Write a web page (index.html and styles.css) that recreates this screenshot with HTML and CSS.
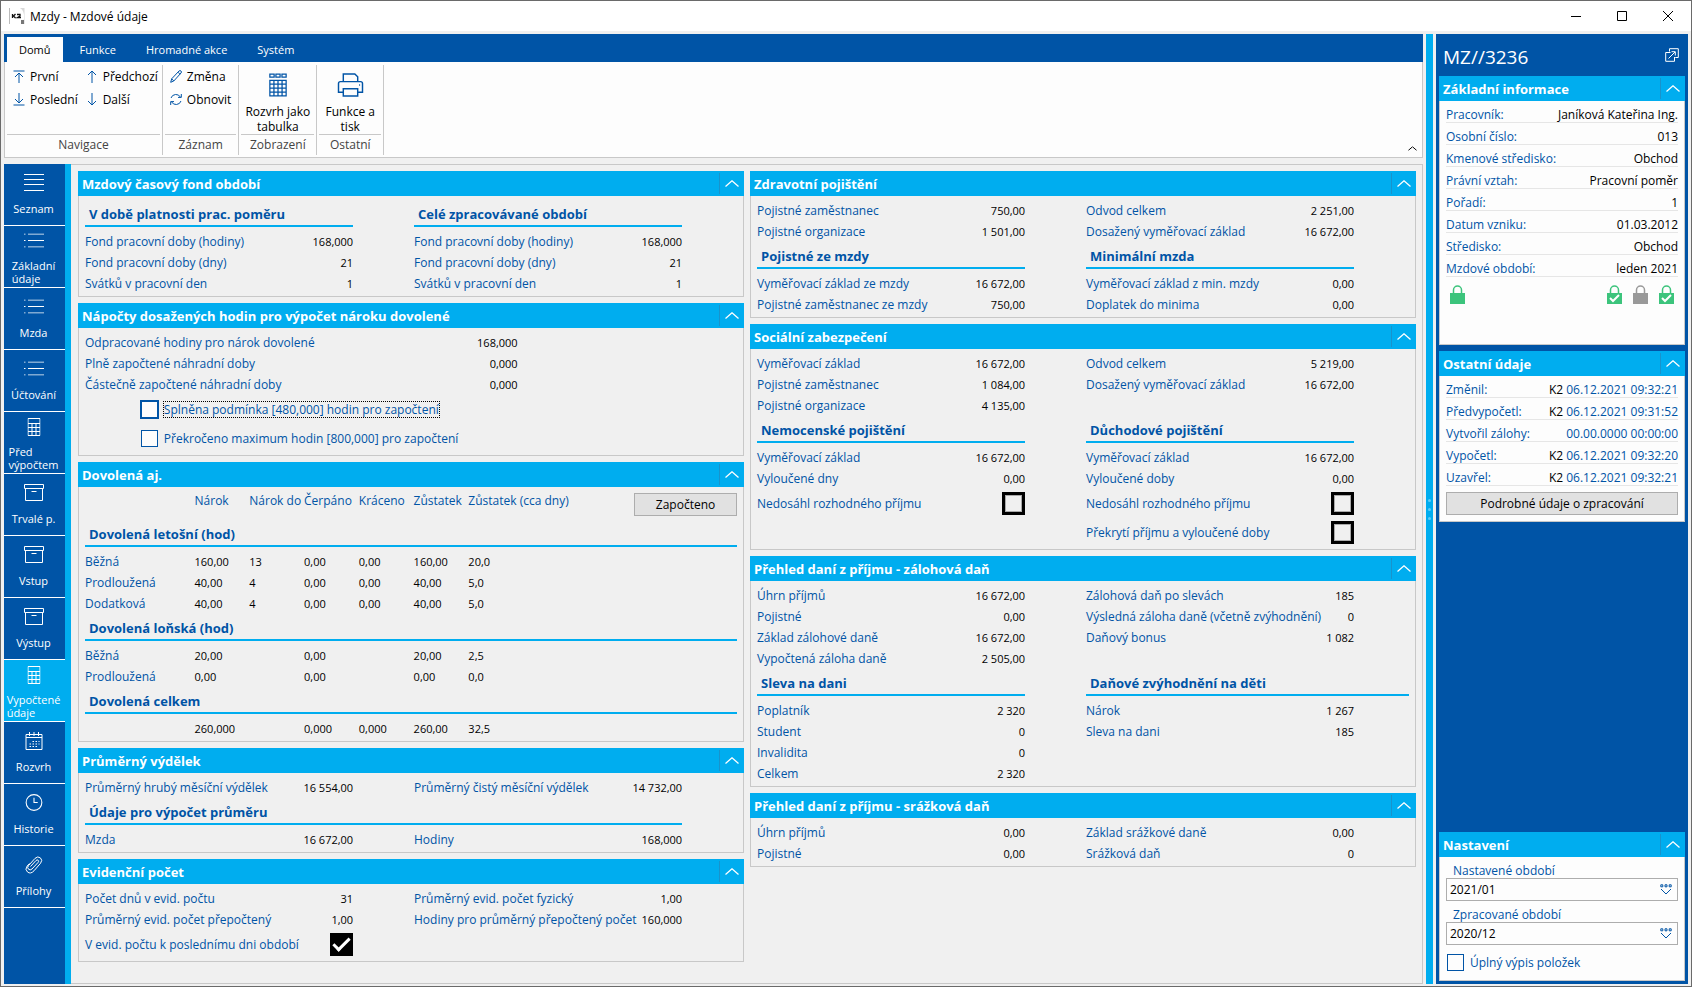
FILE: index.html
```html
<!DOCTYPE html>
<html lang="cs">
<head>
<meta charset="utf-8">
<title>Mzdy - Mzdové údaje</title>
<link rel="stylesheet" href="styles.css">
</head>
<body>
<svg class="defs" aria-hidden="true">
  <symbol id="up" viewBox="0 0 14 7"><path d="M.5 6.500 7 .8l6.500 5.700"/></symbol>
  <symbol id="list" viewBox="0 0 20 14"><path d="M4 .5h16M4 7h16M4 13.500h16M0 .5h1.500M0 7h1.500M0 13.500h1.500"/></symbol>
  <symbol id="calc" viewBox="0 0 13 18"><path d="M.5.5h12v17H.5zM.5 5.500h12M.5 9.500h12M.5 13.500h12M4.500 5.500v12M8.500 5.500v12"/></symbol>
  <symbol id="box" viewBox="0 0 20 17"><path d="M.5.5h19v4H.5zM1.500 4.500v12h17v-12M7.500 7.500h5"/></symbol>
  <symbol id="lock" viewBox="0 0 15 19"><path class="shackle" d="M3.500 8V5a4 4 0 0 1 8 0v3"/><path class="case" d="M0 8h15v11H0z"/></symbol>
  <symbol id="pick" viewBox="0 0 12 11"><path d="M.8.8h2v2h-2zM5 .8h2v2H5zM9.200.8h2v2h-2zM1 5l5 5 5-5"/></symbol>
</svg>
<div class="window">
  <header class="titlebar">
    <svg class="logo" viewBox="0 0 16 16"><path d="M.5 0v16" stroke="#bbb"/><path d="M11 0q5 3 4 11-1 3-3 5h3.500V0z" fill="#d8d8d8"/><path d="M12 12h3v4h-3z" fill="#777"/><path d="M3.500 6v4M6.500 6l-2 2 2 2M8 6.500h3V8L8.500 9.500H12" fill="none" stroke="#111" stroke-width="1.300"/></svg>
    <h1>Mzdy - Mzdové údaje</h1>
    <button class="win" aria-label="Minimalizovat"><svg viewBox="0 0 10 10"><path d="M0 5.500h10"/></svg></button>
    <button class="win" aria-label="Maximalizovat"><svg viewBox="0 0 10 10"><path d="M.5.5h9v9h-9z"/></svg></button>
    <button class="win" aria-label="Zavřít"><svg viewBox="0 0 10 10"><path d="m0 0 10 10M10 0 0 10"/></svg></button>
  </header>
  <div class="frame">
    <div class="left">
      <nav class="tabs">
        <button class="tab on">Domů</button><button class="tab">Funkce</button><button class="tab">Hromadné akce</button><button class="tab">Systém</button>
      </nav>
      <div class="ribbon">
        <section class="group">
          <div class="tools nav">
            <button class="tool"><svg viewBox="0 0 12 13"><path d="M.5 1h11M6 13V3M2 7l4-4 4 4"/></svg>První</button>
            <button class="tool"><svg viewBox="0 0 12 13"><path d="M6 13V1M2 5l4-4 4 4"/></svg>Předchozí</button>
            <button class="tool"><svg viewBox="0 0 12 13"><path d="M.5 12h11M6 0v10M2 6l4 4 4-4"/></svg>Poslední</button>
            <button class="tool"><svg viewBox="0 0 12 13"><path d="M6 0v12M2 8l4 4 4-4"/></svg>Další</button>
          </div>
          <h2>Navigace</h2>
        </section>
        <section class="group">
          <div class="tools">
            <button class="tool"><svg viewBox="0 0 12 13"><path d="m.7 12.300 1-3.500L9 1q1-.9 2 0t0 2L3.800 11zM8 2.200l2 2M1.700 8.800l2.100 2.200"/></svg>Změna</button>
            <button class="tool"><svg viewBox="0 0 12 13"><path d="M1 5a5.200 5.200 0 0 1 9.500-.8M11.300 1v3.400H8M11 8a5.200 5.200 0 0 1-9.500.8M.7 12V8.600H4"/></svg>Obnovit</button>
          </div>
          <h2>Záznam</h2>
        </section>
        <section class="group">
          <button class="big"><svg class="ic-table" viewBox="0 0 17 23"><path d="M.7 1h4.100v3H.7zM6.500 1h4v3h-4zM12.300 1h4v3h-4zM.7 7h15.600v15H.7zM.7 10.700h15.600M.7 14.500h15.600M.7 18.300h15.600M4.600 7v15M8.500 7v15M12.400 7v15"/></svg>Rozvrh jako<br>tabulka</button>
          <h2>Zobrazení</h2>
        </section>
        <section class="group">
          <button class="big"><svg class="ic-print" viewBox="0 0 27 25"><path d="M6 9V1h12l3 3v5M6 20H1V11q0-2 2-2h21q2 0 2 2v9h-5M6 16.500h15V24H6zM22.500 12.500h1"/></svg>Funkce a<br>tisk</button>
          <h2>Ostatní</h2>
        </section>
        <button class="collapse" aria-label="Sbalit pás"><svg viewBox="0 0 14 7"><use href="#up"/></svg></button>
      </div>
      <div class="work">
        <nav class="side">
          <a href="#seznam"><svg viewBox="0 0 20 17"><path d="M0 .5h20M0 5.500h20M0 10.500h20M0 16.500h20"/></svg><span>Seznam</span></a>
          <a href="#zaklad" class="two"><svg viewBox="0 0 20 14"><use href="#list"/></svg><span>Základní údaje</span></a>
          <a href="#mzda"><svg viewBox="0 0 20 14"><use href="#list"/></svg><span>Mzda</span></a>
          <a href="#uctovani"><svg viewBox="0 0 20 14"><use href="#list"/></svg><span>Účtování</span></a>
          <a href="#pred" class="two"><svg class="tall" viewBox="0 0 13 18"><use href="#calc"/></svg><span>Před výpočtem</span></a>
          <a href="#trvale"><svg viewBox="0 0 20 17"><use href="#box"/></svg><span>Trvalé&nbsp;p.</span></a>
          <a href="#vstup"><svg viewBox="0 0 20 17"><use href="#box"/></svg><span>Vstup</span></a>
          <a href="#vystup"><svg viewBox="0 0 20 17"><use href="#box"/></svg><span>Výstup</span></a>
          <a href="#vypoctene" class="two on"><svg class="tall" viewBox="0 0 13 18"><use href="#calc"/></svg><span>Vypočtené údaje</span></a>
          <a href="#rozvrh"><svg class="tall" viewBox="0 0 17 18"><path d="M.5 2.500h16v15H.5zM.5 5.500h16M4 0v4M8.500 0v4M13 0v4M7 9.500h1.500M10 9.500h1.500M13 9.500h1M4 12h1.500M7 12h1.500M10 12h1.500M13 12h1M4 14.500h1.500M7 14.500h1.500M10 14.500h1.500"/></svg><span>Rozvrh</span></a>
          <a href="#historie"><svg viewBox="0 0 16 16"><path d="M8 .6a7.400 7.400 0 1 1 0 14.800A7.400 7.400 0 0 1 8 .6zM8 3.500V8h3.500"/></svg><span>Historie</span></a>
          <a href="#prilohy"><svg class="tall" viewBox="0 0 17 18"><path d="M5 10.500 10.500 4.500q1.200-1.200 2.200-.2t-.2 2.200L6.500 13q-1.800 1.700-3.500.2t0-3.600l6.500-7.200q2.800-2.700 5.400-.5t.2 5.300L8.500 14.800Q5 18.500 2 16t-.3-6L4 7.500"/></svg><span>Přílohy</span></a>
        </nav>
        <main class="content">
          <div class="col">
            <section class="panel">
              <header><h2>Mzdový časový fond období</h2><button aria-label="Sbalit"><svg viewBox="0 0 14 7"><use href="#up"/></svg></button></header>
              <div class="body grid">
                <h3 class="a">V době platnosti prac. poměru</h3><h3 class="b">Celé zpracovávané období</h3>
                <p class="a"><span>Fond pracovní doby (hodiny)</span><b>168,000</b></p><p class="b"><span>Fond pracovní doby (hodiny)</span><b>168,000</b></p>
                <p class="a"><span>Fond pracovní doby (dny)</span><b>21</b></p><p class="b"><span>Fond pracovní doby (dny)</span><b>21</b></p>
                <p class="a"><span>Svátků v pracovní den</span><b>1</b></p><p class="b"><span>Svátků v pracovní den</span><b>1</b></p>
              </div>
            </section>
            <section class="panel">
              <header><h2>Nápočty dosažených hodin pro výpočet nároku dovolené</h2><button aria-label="Sbalit"><svg viewBox="0 0 14 7"><use href="#up"/></svg></button></header>
              <div class="body grid">
                <p class="wide"><span>Odpracované hodiny pro nárok dovolené</span><b>168,000</b></p>
                <p class="wide"><span>Plně započtené náhradní doby</span><b>0,000</b></p>
                <p class="wide"><span>Částečně započtené náhradní doby</span><b>0,000</b></p>
                <label class="tick focus"><input type="checkbox"><span>Splněna podmínka [480,000] hodin pro započtení</span></label>
                <label class="tick"><input type="checkbox"><span>Překročeno maximum hodin [800,000] pro započtení</span></label>
              </div>
            </section>
            <section class="panel">
              <header><h2>Dovolená aj.</h2><button aria-label="Sbalit"><svg viewBox="0 0 14 7"><use href="#up"/></svg></button></header>
              <div class="body">
                <table class="leave">
                  <colgroup><col class="name"><col class="num"><col class="num"><col class="num"><col class="num"><col class="num"><col><col class="act"></colgroup>
                  <thead><tr><td></td><th>Nárok</th><th>Nárok do</th><th>Čerpáno</th><th>Kráceno</th><th>Zůstatek</th><th>Zůstatek (cca dny)</th><td><button class="btn">Započteno</button></td></tr></thead>
                  <tbody>
                    <tr><th colspan="8"><h3>Dovolená letošní (hod)</h3></th></tr>
                    <tr><th>Běžná</th><td>160,00</td><td>13</td><td>0,00</td><td>0,00</td><td>160,00</td><td>20,0</td><td></td></tr>
                    <tr><th>Prodloužená</th><td>40,00</td><td>4</td><td>0,00</td><td>0,00</td><td>40,00</td><td>5,0</td><td></td></tr>
                    <tr><th>Dodatková</th><td>40,00</td><td>4</td><td>0,00</td><td>0,00</td><td>40,00</td><td>5,0</td><td></td></tr>
                    <tr><th colspan="8"><h3>Dovolená loňská (hod)</h3></th></tr>
                    <tr><th>Běžná</th><td>20,00</td><td></td><td>0,00</td><td></td><td>20,00</td><td>2,5</td><td></td></tr>
                    <tr><th>Prodloužená</th><td>0,00</td><td></td><td>0,00</td><td></td><td>0,00</td><td>0,0</td><td></td></tr>
                    <tr><th colspan="8"><h3>Dovolená celkem</h3></th></tr>
                    <tr><td></td><td>260,000</td><td></td><td>0,000</td><td>0,000</td><td>260,00</td><td>32,5</td><td></td></tr>
                  </tbody>
                </table>
              </div>
            </section>
            <section class="panel">
              <header><h2>Průměrný výdělek</h2><button aria-label="Sbalit"><svg viewBox="0 0 14 7"><use href="#up"/></svg></button></header>
              <div class="body grid">
                <p class="a"><span>Průměrný hrubý měsíční výdělek</span><b>16 554,00</b></p><p class="b"><span>Průměrný čistý měsíční výdělek</span><b>14 732,00</b></p>
                <h3 class="ab">Údaje pro výpočet průměru</h3>
                <p class="a"><span>Mzda</span><b>16 672,00</b></p><p class="b"><span>Hodiny</span><b>168,000</b></p>
              </div>
            </section>
            <section class="panel">
              <header><h2>Evidenční počet</h2><button aria-label="Sbalit"><svg viewBox="0 0 14 7"><use href="#up"/></svg></button></header>
              <div class="body grid">
                <p class="a"><span>Počet dnů v evid. počtu</span><b>31</b></p><p class="b"><span>Průměrný evid. počet fyzický</span><b>1,00</b></p>
                <p class="a"><span>Průměrný evid. počet přepočtený</span><b>1,00</b></p><p class="b"><span>Hodiny pro průměrný přepočtený počet</span><b>160,000</b></p>
                <label class="flag a"><span>V evid. počtu k poslednímu dni období</span><input type="checkbox" checked></label>
              </div>
            </section>
          </div>
          <div class="col">
            <section class="panel">
              <header><h2>Zdravotní pojištění</h2><button aria-label="Sbalit"><svg viewBox="0 0 14 7"><use href="#up"/></svg></button></header>
              <div class="body grid">
                <p class="a"><span>Pojistné zaměstnanec</span><b>750,00</b></p><p class="b"><span>Odvod celkem</span><b>2 251,00</b></p>
                <p class="a"><span>Pojistné organizace</span><b>1 501,00</b></p><p class="b"><span>Dosažený vyměřovací základ</span><b>16 672,00</b></p>
                <h3 class="a">Pojistné ze mzdy</h3><h3 class="b">Minimální mzda</h3>
                <p class="a"><span>Vyměřovací základ ze mzdy</span><b>16 672,00</b></p><p class="b"><span>Vyměřovací základ z min. mzdy</span><b>0,00</b></p>
                <p class="a"><span>Pojistné zaměstnanec ze mzdy</span><b>750,00</b></p><p class="b"><span>Doplatek do minima</span><b>0,00</b></p>
              </div>
            </section>
            <section class="panel">
              <header><h2>Sociální zabezpečení</h2><button aria-label="Sbalit"><svg viewBox="0 0 14 7"><use href="#up"/></svg></button></header>
              <div class="body grid">
                <p class="a"><span>Vyměřovací základ</span><b>16 672,00</b></p><p class="b"><span>Odvod celkem</span><b>5 219,00</b></p>
                <p class="a"><span>Pojistné zaměstnanec</span><b>1 084,00</b></p><p class="b"><span>Dosažený vyměřovací základ</span><b>16 672,00</b></p>
                <p class="a"><span>Pojistné organizace</span><b>4 135,00</b></p>
                <h3 class="a">Nemocenské pojištění</h3><h3 class="b">Důchodové pojištění</h3>
                <p class="a"><span>Vyměřovací základ</span><b>16 672,00</b></p><p class="b"><span>Vyměřovací základ</span><b>16 672,00</b></p>
                <p class="a"><span>Vyloučené dny</span><b>0,00</b></p><p class="b"><span>Vyloučené doby</span><b>0,00</b></p>
                <label class="flag a"><span>Nedosáhl rozhodného příjmu</span><input type="checkbox"></label><label class="flag b"><span>Nedosáhl rozhodného příjmu</span><input type="checkbox"></label>
                <label class="flag b"><span>Překrytí příjmu a vyloučené doby</span><input type="checkbox"></label>
              </div>
            </section>
            <section class="panel">
              <header><h2>Přehled daní z příjmu - zálohová daň</h2><button aria-label="Sbalit"><svg viewBox="0 0 14 7"><use href="#up"/></svg></button></header>
              <div class="body grid">
                <p class="a"><span>Úhrn příjmů</span><b>16 672,00</b></p><p class="b"><span>Zálohová daň po slevách</span><b>185</b></p>
                <p class="a"><span>Pojistné</span><b>0,00</b></p><p class="b"><span>Výsledná záloha daně (včetně zvýhodnění)</span><b>0</b></p>
                <p class="a"><span>Základ zálohové daně</span><b>16 672,00</b></p><p class="b"><span>Daňový bonus</span><b>1 082</b></p>
                <p class="a"><span>Vypočtená záloha daně</span><b>2 505,00</b></p>
                <h3 class="a">Sleva na dani</h3><h3 class="rest">Daňové zvýhodnění na děti</h3>
                <p class="a"><span>Poplatník</span><b>2 320</b></p><p class="b"><span>Nárok</span><b>1 267</b></p>
                <p class="a"><span>Student</span><b>0</b></p><p class="b"><span>Sleva na dani</span><b>185</b></p>
                <p class="a"><span>Invalidita</span><b>0</b></p>
                <p class="a"><span>Celkem</span><b>2 320</b></p>
              </div>
            </section>
            <section class="panel">
              <header><h2>Přehled daní z příjmu - srážková daň</h2><button aria-label="Sbalit"><svg viewBox="0 0 14 7"><use href="#up"/></svg></button></header>
              <div class="body grid">
                <p class="a"><span>Úhrn příjmů</span><b>0,00</b></p><p class="b"><span>Základ srážkové daně</span><b>0,00</b></p>
                <p class="a"><span>Pojistné</span><b>0,00</b></p><p class="b"><span>Srážková daň</span><b>0</b></p>
              </div>
            </section>
          </div>
        </main>
      </div>
    </div>
    <div class="splitter"><i></i><i></i><i></i></div>
    <aside class="info">
      <div class="head"><h2>MZ//3236</h2><button aria-label="Otevřít v novém okně"><svg viewBox="0 0 14 14"><path d="M4.500 3.500V.7h8.800v8.800h-3M5.500 4.500H.7v8.800h8.800V9M3.500 10.500 10 4M6.500 3.700h3.800v3.800"/></svg></button></div>
      <section class="panel">
        <header><h2>Základní informace</h2><button aria-label="Sbalit"><svg viewBox="0 0 14 7"><use href="#up"/></svg></button></header>
        <div class="body">
          <p><span>Pracovník:</span><b>Janíková Kateřina Ing.</b></p>
          <p><span>Osobní číslo:</span><b>013</b></p>
          <p><span>Kmenové středisko:</span><b>Obchod</b></p>
          <p><span>Právní vztah:</span><b>Pracovní poměr</b></p>
          <p><span>Pořadí:</span><b>1</b></p>
          <p><span>Datum vzniku:</span><b>01.03.2012</b></p>
          <p><span>Středisko:</span><b>Obchod</b></p>
          <p><span>Mzdové období:</span><b>leden 2021</b></p>
          <div class="locks">
            <svg class="green" viewBox="0 0 15 19"><use href="#lock"/></svg>
            <svg class="green" viewBox="0 0 15 19"><use href="#lock"/><path class="mark" d="m3 13 3 3 6-6"/></svg>
            <svg class="grey" viewBox="0 0 15 19"><use href="#lock"/></svg>
            <svg class="green" viewBox="0 0 15 19"><use href="#lock"/><path class="mark" d="m3 13 3 3 6-6"/></svg>
          </div>
        </div>
      </section>
      <section class="panel">
        <header><h2>Ostatní údaje</h2><button aria-label="Sbalit"><svg viewBox="0 0 14 7"><use href="#up"/></svg></button></header>
        <div class="body">
          <p><span>Změnil:</span><b>K2 <time>06.12.2021 09:32:21</time></b></p>
          <p><span>Předvypočetl:</span><b>K2 <time>06.12.2021 09:31:52</time></b></p>
          <p><span>Vytvořil zálohy:</span><b><time>00.00.0000 00:00:00</time></b></p>
          <p><span>Vypočetl:</span><b>K2 <time>06.12.2021 09:32:20</time></b></p>
          <p><span>Uzavřel:</span><b>K2 <time>06.12.2021 09:32:21</time></b></p>
          <button class="btn">Podrobné údaje o zpracování</button>
        </div>
      </section>
      <section class="panel settings">
        <header><h2>Nastavení</h2><button aria-label="Sbalit"><svg viewBox="0 0 14 7"><use href="#up"/></svg></button></header>
        <div class="body">
          <label class="cap" for="set">Nastavené období</label>
          <div class="combo"><input id="set" type="text" value="2021/01"><button aria-label="Vybrat období"><svg viewBox="0 0 12 11"><use href="#pick"/></svg></button></div>
          <label class="cap" for="done">Zpracované období</label>
          <div class="combo"><input id="done" type="text" value="2020/12"><button aria-label="Vybrat období"><svg viewBox="0 0 12 11"><use href="#pick"/></svg></button></div>
          <label class="tick"><input type="checkbox"><span>Úplný výpis položek</span></label>
        </div>
      </section>
    </aside>
  </div>
</div>
</body>
</html>
```
FILE: styles.css
```css
:root {
  --blue: #0054a6;
  --cyan: #00adef;
  --bg: #f0f0f0;
  --line: #c8c8c8;
  --paper: #fdfdfd;
}
* { box-sizing: border-box; margin: 0; }
body { font: 12px/15px "Open Sans", "Noto Sans", sans-serif; color: #000; background: var(--bg); }
button, input { font: inherit; color: inherit; }
button { border: 0; padding: 0; background: none; }
svg { display: block; fill: none; stroke: currentColor; flex: none; }
.defs { position: absolute; width: 0; height: 0; }
h1, h2, h3 { font-size: 12px; font-weight: 400; }

.window { min-height: 100vh; display: flex; flex-direction: column; border: 1px solid #6a6a6a; }
.titlebar { display: flex; align-items: center; height: 30px; background: #fff; padding-left: 8px; }
.logo { width: 16px; height: 16px; stroke: none; margin-right: 5px; }
.titlebar h1 { flex: 1; }
.win { width: 46px; height: 30px; display: grid; place-items: center; }
.win svg { width: 10px; height: 10px; }

.frame { flex: 1; display: flex; padding: 3px 3px 2px; }
.left { flex: 1; min-width: 0; display: flex; flex-direction: column; }

.tabs { display: flex; align-items: flex-end; height: 28px; background: var(--blue); color: #fff; padding-left: 3px; font-size: 11px; }
.tab { height: 25px; padding: 0 15px; }
.tab.on { background: var(--paper); color: #000; padding: 0 12px; margin-right: 2px; }

.ribbon { display: flex; height: 96px; background: var(--paper); border: 1px solid var(--line); border-top: 0; padding: 3px 2px 2px; }
.group { display: flex; flex-direction: column; justify-content: space-between; border-right: 1px solid var(--line); padding-right: 2px; margin-right: 2px; }
.group h2 { border-top: 1px solid var(--line); text-align: center; line-height: 20px; color: #444; }
.tools { display: grid; grid-auto-rows: 23px; padding: 0 5px; }
.tools.nav { grid-template-columns: auto auto; column-gap: 8px; padding: 0 2px 0 6px; }
.tool { display: flex; align-items: center; gap: 5px; }
.tool svg { width: 12px; height: 13px; color: var(--blue); }
.big { min-width: 62px; padding: 8px 4px 0; }
.big svg { color: var(--blue); margin: 0 auto 7px; height: 24px; stroke-width: 1.5; }
.ic-table { width: 18px; }
.big .ic-table { stroke-width: 1.2; }
.ic-print { width: 27px; }
.collapse { margin: auto 3px 4px auto; }
.collapse svg { width: 9px; height: 5px; stroke-width: 1.5; }

.work { flex: 1; display: flex; margin-top: 6px; }
.side { width: 67px; background: var(--blue); border-right: 6px solid var(--cyan); }
.side a { display: flex; flex-direction: column; align-items: center; justify-content: space-between; height: 62px; padding: 10px 2px 10px 0; border-bottom: 1px solid #fff; color: #fff; text-decoration: none; font-size: 11px; line-height: 13px; }
.side a span { width: min-content; }
.side a svg { width: 20px; height: 17px; }
.side a svg.tall { height: 18px; }
.side a.two { padding-top: 6px; padding-bottom: 2px; }
.side a.on { background: var(--cyan); }

.content { flex: 1; min-width: 0; display: grid; grid-template-columns: 1fr 1fr; gap: 6px; align-items: start; border: 1px solid var(--line); border-left: 0; padding: 6px 6px 6px 7px; }
.col { display: flex; flex-direction: column; gap: 6px; min-width: 0; }

.panel > header { display: flex; align-items: center; justify-content: space-between; height: 25px; background: var(--cyan); color: #fff; padding-left: 4px; }
.panel > header h2 { padding-top: 2px; font-size: 13px; font-weight: 700; white-space: nowrap; }
.panel > header button { width: 25px; height: 21px; display: grid; place-items: center; border-left: 1px solid #1893cc; }
.panel > header svg { width: 14px; height: 7px; stroke-width: 1.3; }
.body { border: 1px solid var(--line); border-top: 0; padding: 4px 6px 2px; }
.grid { display: grid; grid-template-columns: repeat(12, 1fr); column-gap: 6px; }
.a { grid-column: 1 / span 5; }
.b { grid-column: 7 / span 5; }
.ab { grid-column: 1 / span 11; }
.rest { grid-column: 7 / span 6; }
.wide { grid-column: 1 / span 8; }
.body p, .flag { display: flex; align-items: center; justify-content: space-between; height: 21px; color: var(--blue); white-space: nowrap; }
.body b { font-weight: 400; color: #000; }
.grid b { font-size: 11px; }
h3 { height: 25px; margin: 2px 0 4px; padding-left: 4px; border-bottom: 2px solid var(--cyan); color: var(--blue); font-size: 13px; font-weight: 700; line-height: 25px; text-align: left; }

.flag { height: 29px; }
.flag input { appearance: none; margin: 0; width: 23px; height: 23px; border: 3px solid #000; background: var(--bg); box-shadow: inset 0 0 0 1px #aaa; }
.flag input:checked { background: #000; box-shadow: none; display: grid; place-items: center; }
.flag input:checked::before { content: ""; width: 14px; height: 6px; margin-bottom: 5px; border: solid #fff; border-width: 0 0 3px 3px; transform: rotate(-45deg); }
.tick { grid-column: 2 / -1; display: flex; align-items: center; height: 29px; gap: 5px; color: var(--blue); }
.tick input { appearance: none; margin: 0 1px; width: 17px; height: 17px; border: 1px solid var(--blue); background: var(--paper); }
.tick.focus input { width: 19px; height: 19px; margin: 0; border-width: 2px; }
.tick.focus span { outline: 1px dotted #000; }

.leave { width: 100%; table-layout: fixed; border-collapse: collapse; }
.leave .name { width: 16.8%; }
.leave .num { width: 8.4%; }
.leave .act { width: 103px; }
.leave td, .leave th { padding: 0; height: 21px; text-align: left; font-weight: 400; white-space: nowrap; }
.leave th { color: var(--blue); }
.leave tbody td { font-size: 11px; }
.leave thead tr > * { height: 29px; vertical-align: top; padding-top: 2px; }
.btn { display: block; width: 100%; height: 23px; background: #e1e1e1; border: 1px solid #adadad; }

.splitter { width: 7px; margin: 0 3px; background: var(--cyan); display: flex; flex-direction: column; align-items: center; justify-content: center; gap: 6px; }
.splitter i { width: 3px; height: 3px; border-radius: 50%; background: #5cccf8; }

.info { width: 252px; background: var(--blue); padding: 0 3px 3px; display: flex; flex-direction: column; gap: 6px; }
.head { display: flex; align-items: center; justify-content: space-between; height: 36px; color: #fff; padding: 6px 6px 0 4px; }
.head h2 { font-size: 19px; line-height: 24px; padding-top: 4px; }
.head svg { width: 14px; height: 14px; }
.info .body { background: var(--paper); padding: 0 6px; }
.info .body p { height: 22px; align-items: flex-end; line-height: 14px; border-bottom: 1px solid #e6e6e6; }
.info time { color: var(--blue); }
.locks { display: flex; gap: 11px; padding: 8px 4px 40px; }
.locks svg { width: 15px; height: 19px; }
.locks svg:first-child { margin-right: auto; }
.green { color: #3cc47c; }
.grey { color: #999; }
.shackle { stroke-width: 1.5; }
.case { fill: currentColor; stroke: none; }
.mark { stroke: #fff; stroke-width: 2; }
.info .btn { margin: 6px 0; }
.settings { margin-top: auto; }
.cap { display: block; height: 21px; line-height: 27px; padding-left: 7px; color: var(--blue); }
.combo { display: flex; align-items: center; height: 23px; border: 1px solid #adadad; padding-right: 5px; }
.combo input { flex: 1; min-width: 0; border: 0; padding: 0 3px; background: none; outline: 0; font-size: 12px; }
.combo svg { width: 12px; height: 11px; color: var(--blue); }
.settings .tick { height: 35px; }
```
